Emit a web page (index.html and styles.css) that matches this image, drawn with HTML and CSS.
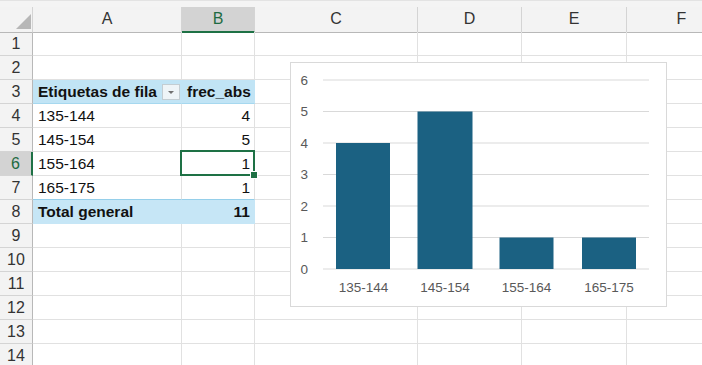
FILE: index.html
```html
<!DOCTYPE html>
<html lang="es">
<head>
  <meta charset="UTF-8">
  <title>Tabla dinámica frec_abs</title>
  <link rel="stylesheet" href="styles.css">
</head>
<body>
  <div class="sheet">
    <div class="topbar"></div>

    <!-- cabecera de columnas -->
    <div class="row head">
      <div class="corner"><span class="tri"></span></div>
      <div class="col">A</div>
      <div class="col sel">B</div>
      <div class="col">C</div>
      <div class="col">D</div>
      <div class="col">E</div>
      <div class="col">F</div>
    </div>

    <div class="row"><div class="num">1</div><div class="c"></div><div class="c"></div><div class="c"></div><div class="c"></div><div class="c"></div><div class="c"></div></div>
    <div class="row"><div class="num">2</div><div class="c"></div><div class="c"></div><div class="c"></div><div class="c"></div><div class="c"></div><div class="c"></div></div>

    <!-- tabla dinámica -->
    <div class="row">
      <div class="num">3</div>
      <div class="c pv-head bold">Etiquetas de fila<span class="filter"><span class="arrow"></span></span></div>
      <div class="c pv-head bold right">frec_abs</div>
      <div class="c"></div><div class="c"></div><div class="c"></div><div class="c"></div>
    </div>
    <div class="row">
      <div class="num">4</div><div class="c">135-144</div><div class="c right">4</div>
      <div class="c"></div><div class="c"></div><div class="c"></div><div class="c"></div>
    </div>
    <div class="row">
      <div class="num">5</div><div class="c">145-154</div><div class="c right">5</div>
      <div class="c"></div><div class="c"></div><div class="c"></div><div class="c"></div>
    </div>
    <div class="row">
      <div class="num selrow">6</div><div class="c">155-164</div><div class="c right active">1</div>
      <div class="c"></div><div class="c"></div><div class="c"></div><div class="c"></div>
    </div>
    <div class="row">
      <div class="num">7</div><div class="c pv-last">165-175</div><div class="c right pv-last">1</div>
      <div class="c"></div><div class="c"></div><div class="c"></div><div class="c"></div>
    </div>
    <div class="row">
      <div class="num">8</div><div class="c pv-total bold">Total general</div><div class="c pv-total bold right">11</div>
      <div class="c"></div><div class="c"></div><div class="c"></div><div class="c"></div>
    </div>

    <div class="row"><div class="num">9</div><div class="c"></div><div class="c"></div><div class="c"></div><div class="c"></div><div class="c"></div><div class="c"></div></div>
    <div class="row"><div class="num">10</div><div class="c"></div><div class="c"></div><div class="c"></div><div class="c"></div><div class="c"></div><div class="c"></div></div>
    <div class="row"><div class="num">11</div><div class="c"></div><div class="c"></div><div class="c"></div><div class="c"></div><div class="c"></div><div class="c"></div></div>
    <div class="row"><div class="num">12</div><div class="c"></div><div class="c"></div><div class="c"></div><div class="c"></div><div class="c"></div><div class="c"></div></div>
    <div class="row"><div class="num">13</div><div class="c"></div><div class="c"></div><div class="c"></div><div class="c"></div><div class="c"></div><div class="c"></div></div>
    <div class="row"><div class="num">14</div><div class="c"></div><div class="c"></div><div class="c"></div><div class="c"></div><div class="c"></div><div class="c"></div></div>

    <!-- gráfico de columnas flotante -->
    <div class="chart">
      <svg width="375" height="243" viewBox="0 0 375 243">
        <g class="grid">
          <line x1="32" y1="17" x2="358" y2="17"/>
          <line x1="32" y1="48.5" x2="358" y2="48.5"/>
          <line x1="32" y1="80" x2="358" y2="80"/>
          <line x1="32" y1="111.5" x2="358" y2="111.5"/>
          <line x1="32" y1="143" x2="358" y2="143"/>
          <line x1="32" y1="174.5" x2="358" y2="174.5"/>
          <line x1="32" y1="206" x2="358" y2="206"/>
        </g>
        <g class="ylab">
          <text x="17" y="21.5">6</text>
          <text x="17" y="53">5</text>
          <text x="17" y="84.5">4</text>
          <text x="17" y="116">3</text>
          <text x="17" y="147.5">2</text>
          <text x="17" y="179">1</text>
          <text x="17" y="210.5">0</text>
        </g>
        <g class="bars">
          <rect x="45" y="80" width="54" height="126"/>
          <rect x="126.5" y="48.5" width="55" height="157.5"/>
          <rect x="208.5" y="174.5" width="54" height="31.5"/>
          <rect x="291" y="174.5" width="54" height="31.5"/>
        </g>
        <g class="xlab">
          <text x="72.5" y="229">135-144</text>
          <text x="154" y="229">145-154</text>
          <text x="235.5" y="229">155-164</text>
          <text x="318" y="229">165-175</text>
        </g>
      </svg>
    </div>
  </div>
</body>
</html>
```

FILE: styles.css
```css
/* hoja de cálculo */
body {
  margin: 0;
  background: #ffffff;
  font-family: "Liberation Sans", Arial, sans-serif;
  font-size: 15.5px;
  color: #111;
  overflow: hidden;
}

.sheet {
  position: relative;
  width: 702px;
  height: 365px;
  overflow: hidden;
}

.topbar {
  height: 7px;
  background: #f4f4f4;
  border-top: 1px solid #e3e3e3;
  box-sizing: border-box;
}

.row {
  display: grid;
  grid-template-columns: 33px 149px 73px 163px 104px 105px 110px;
  height: 24px;
}

.row > div {
  box-sizing: border-box;
  border-right: 1px solid #e1e1e1;
  border-bottom: 1px solid #e1e1e1;
  line-height: 23px;
  white-space: nowrap;
}

/* cabeceras */
.head {
  height: 25px;
}

.head > div {
  background: #f3f3f3;
  border-right: 1px solid #d4d4d4;
  border-bottom: 1px solid #b8b8b8;
  text-align: center;
  color: #333;
  line-height: 24px;
  font-size: 16px;
}

.head > .sel {
  background: #d3d3d3;
  color: #1e6b42;
  border-bottom: 2px solid #1e7145;
}

.corner {
  position: relative;
}

.tri {
  position: absolute;
  right: 1px;
  bottom: 3px;
  width: 0;
  height: 0;
  border-left: 15px solid transparent;
  border-bottom: 15px solid #b7b7b7;
}

.row > .num {
  background: #f3f3f3;
  border-right: 1px solid #b8b8b8;
  border-bottom: 1px solid #d4d4d4;
  text-align: center;
  color: #333;
  font-size: 16px;
}

.row > .selrow {
  background: #d3d3d3;
  color: #1e6b42;
  border-right: 2px solid #1e7145;
}

/* celdas */
.c {
  padding: 0 4px 0 5px;
}

.right {
  text-align: right;
}

.bold {
  font-weight: bold;
}

.row > .pv-head {
  background: #c1e4f5;
  border-right-color: #c1e4f5;
  border-bottom: 1px solid #a6d8ef;
  position: relative;
}

.row > .pv-total {
  background: #c6e6f6;
  border-right-color: #c6e6f6;
  border-bottom-color: #c6e6f6;
}

.row > .pv-last {
  border-bottom: 1px solid #95cfea;
}

.filter {
  position: absolute;
  right: 1px;
  top: 4px;
  width: 18px;
  height: 16px;
  box-sizing: border-box;
  background: #eef4f7;
  border: 1px solid #c3cdd2;
}

.arrow {
  position: absolute;
  left: 5px;
  top: 6px;
  border-left: 3px solid transparent;
  border-right: 3px solid transparent;
  border-top: 3px solid #707070;
}

.active {
  position: relative;
}

.active::after {
  content: "";
  position: absolute;
  left: -2px;
  top: -2px;
  right: -1px;
  bottom: -1px;
  border: 2px solid #1e7145;
}

.active::before {
  content: "";
  position: absolute;
  right: -4px;
  bottom: -4px;
  width: 6px;
  height: 6px;
  background: #1e7145;
  border: 1px solid #fff;
  z-index: 1;
}

/* gráfico */
.chart {
  position: absolute;
  left: 290px;
  top: 62px;
  width: 377px;
  height: 245px;
  box-sizing: border-box;
  background: #ffffff;
  border: 1px solid #d9d9d9;
}

.chart svg {
  display: block;
}

.grid line {
  stroke: #d9d9d9;
  stroke-width: 1;
}

.bars rect {
  fill: #1b6182;
}

.ylab text,
.xlab text {
  font-family: "Liberation Sans", Arial, sans-serif;
  font-size: 13.5px;
  fill: #595959;
}

.ylab text {
  text-anchor: end;
}

.xlab text {
  text-anchor: middle;
}
```
